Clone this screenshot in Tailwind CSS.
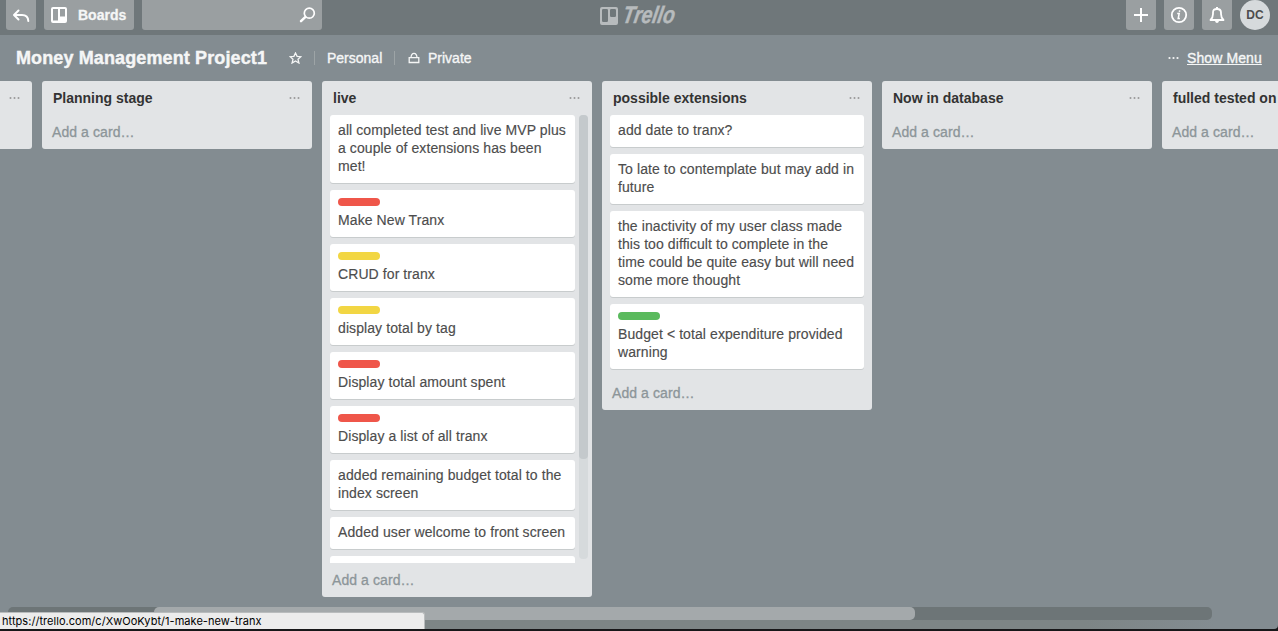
<!DOCTYPE html>
<html lang="en">
<head>
<meta charset="utf-8">
<title>Money Management Project1</title>
<script src="https://cdn.jsdelivr.net/npm/@tailwindcss/browser@4"></script>
</head>
<body class="relative flex h-[631px] w-full flex-col overflow-hidden bg-[#838c91] font-['Liberation_Sans',Arial,sans-serif] text-sm leading-[18px] text-[#4d4d4d]">
<header class="relative flex h-[35px] shrink-0 items-start justify-between bg-[#6f777a] pr-2 pl-1.5">
  <div class="flex gap-2">
    <div class="flex h-[30px] w-[30px] items-center justify-center rounded-b-[3px] bg-[#9a9fa1]">
      <svg class="mt-0.5 h-4 w-[18px]" viewBox="0 0 18 16" fill="none" stroke="#fff" stroke-width="2" stroke-linecap="round" stroke-linejoin="round"><path d="M6.500 2.500 2 7l4.500 4.500M2.500 7H10q6 0 6.300 6"/></svg>
    </div>
    <div class="flex h-[30px] w-[90px] items-center rounded-b-[3px] bg-[#9a9fa1] pl-[7px] font-bold text-[#f5f6f6]">
      <svg class="h-4 w-4" viewBox="0 0 16 16"><path fill="#fff" fill-rule="evenodd" d="M2 0h12q2 0 2 2v12q0 2-2 2H2q-2 0-2-2V2q0-2 2-2ZM2 2v11.500h5V2ZM9 2v7.500h5V2Z"/></svg>
      <span class="ml-[11px] [-webkit-text-stroke:0.3px_#f5f6f6]">Boards</span>
    </div>
    <div class="flex h-[30px] w-[180px] items-center justify-end rounded-b-[3px] bg-[#9a9fa1] pr-1.5">
      <svg class="h-4 w-[17px]" viewBox="0 0 17 16" fill="none" stroke="#fff" stroke-linecap="round"><circle cx="10.300" cy="6.200" r="5" stroke-width="1.700"/><path d="m6.200 10.200-4.200 4" stroke-width="2.500"/></svg>
    </div>
  </div>
  <div class="absolute top-[1px] left-[600px] flex items-center">
    <svg class="mt-[3px] h-[18px] w-[18px]" viewBox="0 0 18 18"><path fill="#b7bbbd" fill-rule="evenodd" d="M2 0h14q2 0 2 2v14q0 2-2 2H2q-2 0-2-2V2q0-2 2-2ZM3.300 2Q2 2 2 3.300v10.400Q2 15 3.300 15h3.400Q8 15 8 13.700V3.300Q8 2 6.700 2ZM11.300 2Q10 2 10 3.300v5.400Q10 10 11.300 10h3.400Q16 10 16 8.700V3.300Q16 2 14.700 2Z"/></svg>
    <svg class="h-[26px] w-[64px]" viewBox="0 0 64 26"><text x="3" y="21.700" transform="translate(4.500 0) skewX(-10)" textLength="52" lengthAdjust="spacingAndGlyphs" fill="#b7bbbd" stroke="#b7bbbd" stroke-width=".4" font-family="Liberation Sans" font-size="24" font-weight="bold" font-style="italic">Trello</text></svg>
  </div>
  <div class="flex gap-2">
    <div class="flex h-[30px] w-[30px] items-center justify-center rounded-b-[3px] bg-[#9a9fa1]">
      <svg class="h-3.5 w-3.5" viewBox="0 0 14 14" stroke="#fff" stroke-width="2"><path d="M7 0v14M0 7h14"/></svg>
    </div>
    <div class="flex h-[30px] w-[30px] items-center justify-center rounded-b-[3px] bg-[#9a9fa1]">
      <svg class="h-[18px] w-[18px]" viewBox="0 0 18 18" fill="none" stroke="#fff" stroke-width="1.800"><circle cx="9" cy="9" r="7.200"/><path d="M7.200 7.500h2L8.200 12.500h1.700M9.700 4.300l-.3 1.600" stroke-width="1.500"/></svg>
    </div>
    <div class="flex h-[30px] w-[30px] items-center justify-center rounded-b-[3px] bg-[#9a9fa1]">
      <svg class="h-[18px] w-4" viewBox="0 0 16 18"><path d="M1.500 14Q4 11.500 4 8V6.500Q4 3 8 3t4 3.500V8q0 3.500 2.500 6Z" fill="none" stroke="#fff" stroke-width="1.800" stroke-linejoin="round"/><path d="M7 1h2v2H7ZM6 15h4q-.5 2-2 2t-2-2Z" fill="#fff"/></svg>
    </div>
    <div class="flex h-[30px] w-[30px] items-center justify-center rounded-full bg-[#d6dadc] text-xs font-bold text-[#4d4d4d]">DC</div>
  </div>
</header>
<div class="flex h-[46px] shrink-0 items-center pr-4 pl-4 text-[#f5f6f6]">
  <h1 class="w-[251px] text-[18px] leading-6 font-bold whitespace-nowrap tracking-[0.12px] [-webkit-text-stroke:0.4px_#f5f6f6]">Money Management Project1</h1>
  <svg class="ml-[22px] h-3 w-[13px]" viewBox="0 0 13 12" fill="none" stroke="#f5f6f6" stroke-width="1.300"><path d="m6.500 1 1.600 3.400 3.800.3-2.900 2.500.9 3.800-3.400-2-3.400 2L4 7.200 1.100 4.700l3.800-.3Z"/></svg>
  <span class="ml-3 h-3.5 w-px bg-[#9da4a6]"></span>
  <span class="ml-3 w-[55px] whitespace-nowrap [-webkit-text-stroke:0.35px_#f5f6f6]">Personal</span>
  <span class="ml-3 h-3.5 w-px bg-[#9da4a6]"></span>
  <svg class="ml-[13px] h-3 w-3" viewBox="0 0 12 12" fill="none" stroke="#f5f6f6" stroke-width="1.300"><path d="M1.200 5.600h9.600v4.900H1.200ZM3 5.500Q3.300 1.400 6 1.400T9 5.500"/></svg>
  <span class="ml-2 [-webkit-text-stroke:0.35px_#f5f6f6]">Private</span>
  <svg class="ml-auto h-1 w-[11px]" viewBox="0 0 11 4" fill="#f5f6f6"><circle cx="1.500" cy="2" r="1.100"/><circle cx="5.500" cy="2" r="1.100"/><circle cx="9.500" cy="2" r="1.100"/></svg>
  <span class="ml-2 w-[75px] whitespace-nowrap tracking-[0.1px] underline [-webkit-text-stroke:0.35px_#f5f6f6]">Show Menu</span>
</div>
<main id="board" class="flex h-[516px] w-full shrink-0 items-start gap-2.5 overflow-hidden"></main>
<div class="mt-2.5 ml-2 flex h-[13px] w-[1204px] shrink-0 rounded-[5px] bg-[#6d7577]">
  <div class="ml-[146px] w-[761px] rounded-[5px] bg-[#a4a9ab]"></div>
</div>
<div class="mt-auto h-[11px] w-full shrink-0 bg-[#171719] pb-[2px]">
  <div class="h-[9px] rounded-br-[4px] bg-linear-to-r from-[#7d8586] from-85% to-[#838c91] to-95%"></div>
</div>
<div class="absolute bottom-[2px] left-0 h-[17px] w-[425px] rounded-tr-[3px] border-t border-r border-[#b9bcbd] bg-[#ececec] pl-0.5 font-['Inter',sans-serif] text-[11px] leading-4 tracking-[0.04px] whitespace-nowrap text-black">https://trello.com/c/XwOoKybt/1-make-new-tranx</div>
<script>
const red = 'bg-[#ef564a]', yellow = 'bg-[#f2d643]', green = 'bg-[#5aba5d]';
const lists = [
  {name: '', edge: true, cards: []},
  {name: 'Planning stage', cards: []},
  {name: 'live', scroll: true, cards: [
    ['all completed test and live MVP plus<br>a couple of extensions has been<br>met!'],
    ['Make New Tranx', red], ['CRUD for tranx', yellow], ['display total by tag', yellow],
    ['Display total amount spent', red], ['Display a list of all tranx', red],
    ['added remaining budget total to the<br>index screen'], ['Added user welcome to front screen'], ['&nbsp;']]},
  {name: 'possible extensions', cards: [
    ['add date to tranx?'], ['To late to contemplate but may add in<br>future'],
    ['the inactivity of my user class made<br>this too difficult to complete in the<br>time could be quite easy but will need<br>some more thought'],
    ['Budget &lt; total expenditure provided<br>warning', green]]},
  {name: 'Now in database', cards: []},
  {name: 'fulled tested on', cards: []}
];
const card = ([text, color]) => `<article class="shrink-0 rounded-[3px] bg-white px-2 pb-2 tracking-[0.09px] whitespace-nowrap shadow-[0_1px_0_#c8cccd] [-webkit-text-stroke:0.15px_#4d4d4d] ${color ? 'pt-2' : 'pt-1.5'}">${color ? `<div class="mb-[5px] h-2 w-[42px] rounded-[4px] ${color}"></div>` : ''}${text}</article>`;
document.getElementById('board').innerHTML = lists.map(l => `
<section class="flex shrink-0 flex-col bg-[#e2e4e6] ${l.edge ? 'w-8 rounded-r-[3px]' : 'w-[270px] rounded-[3px]'} ${l.scroll ? 'h-[516px]' : ''}">
  <div class="flex h-[34px] shrink-0 items-center justify-between pr-3 ${l.edge ? 'pl-0' : 'pl-[11px]'}">
    <h2 class="font-bold whitespace-nowrap text-[#333]">${l.name}</h2>
    <svg class="h-1 w-[11px]" viewBox="0 0 11 4" fill="#999"><circle cx="1.500" cy="2" r="1"/><circle cx="5.500" cy="2" r="1"/><circle cx="9.500" cy="2" r="1"/></svg>
  </div>
  ${l.cards.length ? `<div class="flex pl-2 ${l.scroll ? 'h-[448px] gap-1' : 'pr-2 pb-1.5'}">
    <div class="flex flex-col gap-[7px] overflow-hidden ${l.scroll ? 'w-[245px]' : 'w-[254px] pb-px'}">${l.cards.map(card).join('')}</div>
    ${l.scroll ? '<div class="h-[444px] w-[9px] rounded-[4px] bg-[#d6dadc]"><div class="h-[344px] rounded-[4px] bg-[#c4c9cc]"></div></div>' : ''}
  </div>` : ''}
  <div class="h-[34px] shrink-0 pt-2 pl-2.5 tracking-[0.08px] text-[#8c9599] [-webkit-text-stroke:0.3px_#8c9599]">${l.edge ? '' : 'Add a card…'}</div>
</section>`).join('');
</script>
</body>
</html>
